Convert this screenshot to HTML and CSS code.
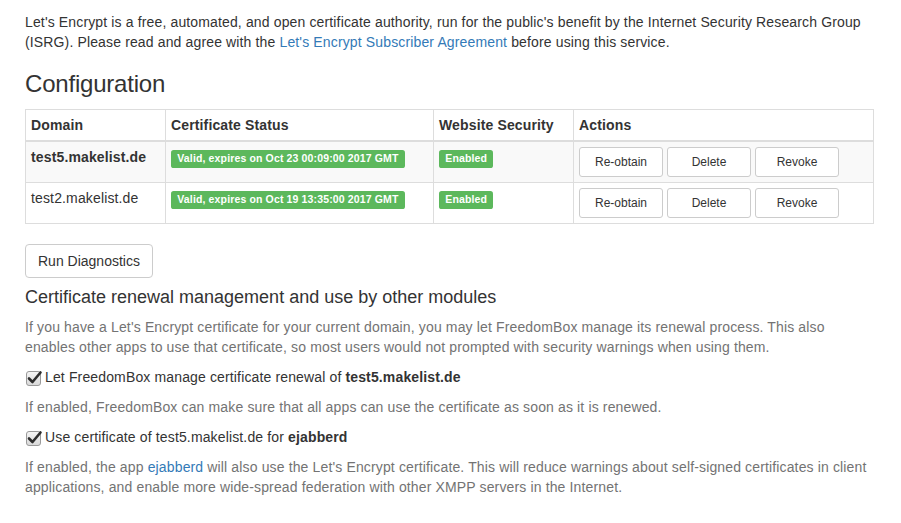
FILE: index.html
```html
<!DOCTYPE html>
<html>
<head>
<meta charset="utf-8">
<link rel="stylesheet" href="styles.css">
</head>
<body>
<div class="container">
  <p class="intro">Let's Encrypt is a free, automated, and open certificate authority, run for the public's benefit by the Internet Security Research Group (ISRG). Please read and agree with the <a href="#">Let's Encrypt Subscriber Agreement</a> before using this service.</p>

  <h3 class="title">Configuration</h3>

  <table class="cert-table">
    <colgroup>
      <col class="c-domain">
      <col class="c-status">
      <col class="c-security">
      <col class="c-actions">
    </colgroup>
    <thead>
      <tr>
        <th>Domain</th>
        <th>Certificate Status</th>
        <th>Website Security</th>
        <th>Actions</th>
      </tr>
    </thead>
    <tbody>
      <tr class="odd">
        <td><strong>test5.makelist.de</strong></td>
        <td><span class="label">Valid, expires on Oct 23 00:09:00 2017 GMT</span></td>
        <td><span class="label">Enabled</span></td>
        <td>
          <div class="actions">
            <button class="btn btn-sm">Re-obtain</button>
            <button class="btn btn-sm">Delete</button>
            <button class="btn btn-sm">Revoke</button>
          </div>
        </td>
      </tr>
      <tr>
        <td>test2.makelist.de</td>
        <td><span class="label">Valid, expires on Oct 19 13:35:00 2017 GMT</span></td>
        <td><span class="label">Enabled</span></td>
        <td>
          <div class="actions">
            <button class="btn btn-sm">Re-obtain</button>
            <button class="btn btn-sm">Delete</button>
            <button class="btn btn-sm">Revoke</button>
          </div>
        </td>
      </tr>
    </tbody>
  </table>

  <button class="btn btn-default">Run Diagnostics</button>

  <h4 class="subtitle">Certificate renewal management and use by other modules</h4>

  <p class="help">If you have a Let's Encrypt certificate for your current domain, you may let FreedomBox manage its renewal process. This also enables other apps to use that certificate, so most users would not prompted with security warnings when using them.</p>

  <div class="checkbox">
    <label>
      <svg class="cb" width="17" height="17" viewBox="0 0 17 17">
        <defs>
          <linearGradient id="g1" x1="0" y1="0" x2="0" y2="1">
            <stop offset="0" stop-color="#f6f6f6"/>
            <stop offset="1" stop-color="#d8d8d8"/>
          </linearGradient>
        </defs>
        <rect x="0.5" y="2.5" width="14" height="14" rx="2.5" fill="url(#g1)" stroke="#9a9a9a"/>
        <path d="M3 9.5 L6.5 13 L14.5 3.5" fill="none" stroke="#2e2e2e" stroke-width="2.6" stroke-linecap="round" stroke-linejoin="round"/>
      </svg>
      <span>Let FreedomBox manage certificate renewal of <strong>test5.makelist.de</strong></span>
    </label>
  </div>
  <p class="help block">If enabled, FreedomBox can make sure that all apps can use the certificate as soon as it is renewed.</p>

  <div class="checkbox">
    <label>
      <svg class="cb" width="17" height="17" viewBox="0 0 17 17">
        <defs>
          <linearGradient id="g2" x1="0" y1="0" x2="0" y2="1">
            <stop offset="0" stop-color="#f6f6f6"/>
            <stop offset="1" stop-color="#d8d8d8"/>
          </linearGradient>
        </defs>
        <rect x="0.5" y="2.5" width="14" height="14" rx="2.5" fill="url(#g2)" stroke="#9a9a9a"/>
        <path d="M3 9.5 L6.5 13 L14.5 3.5" fill="none" stroke="#2e2e2e" stroke-width="2.6" stroke-linecap="round" stroke-linejoin="round"/>
      </svg>
      <span>Use certificate of test5.makelist.de for <strong>ejabberd</strong></span>
    </label>
  </div>
  <p class="help block">If enabled, the app <a href="#">ejabberd</a> will also use the Let's Encrypt certificate. This will reduce warnings about self-signed certificates in client applications, and enable more wide-spread federation with other XMPP servers in the Internet.</p>
</div>
</body>
</html>
```

FILE: styles.css
```css
html, body {
  margin: 0;
  padding: 0;
  background: #fff;
}

body {
  font-family: "Liberation Sans", Arial, Helvetica, sans-serif;
  font-size: 14px;
  line-height: 20px;
  color: #333;
  letter-spacing: 0.14px;
}

.container {
  padding: 12px 28px 0 25px;
}

a {
  color: #337ab7;
  text-decoration: none;
}

p {
  margin: 0 0 10px;
}

.title {
  font-size: 24px;
  font-weight: 500;
  line-height: 1.1;
  margin: 19px 0 12px;
  color: #333;
  letter-spacing: -0.2px;
}

.subtitle {
  font-size: 18px;
  font-weight: 500;
  line-height: 1.1;
  margin: 10px 0 9px;
  color: #333;
  letter-spacing: 0;
}

.cert-table {
  width: 100%;
  table-layout: fixed;
  border-collapse: collapse;
  border-spacing: 0;
  margin-bottom: 20px;
  border: 1px solid #ddd;
}

.c-domain { width: 140px; }
.c-status { width: 268px; }
.c-security { width: 140px; }
.c-actions { width: 300px; }

.cert-table th,
.cert-table td {
  padding: 5px;
  border: 1px solid #ddd;
  text-align: left;
  vertical-align: top;
  line-height: 20px;
}

.cert-table thead th {
  border-bottom: 2px solid #ddd;
  font-weight: bold;
  vertical-align: bottom;
}

.cert-table tr.odd td {
  background: #f9f9f9;
}

.label {
  display: inline;
  padding: .2em .6em .3em;
  font-size: 10.5px;
  font-weight: bold;
  line-height: 1;
  color: #fff;
  background: #5cb85c;
  border-radius: .25em;
  white-space: nowrap;
  vertical-align: baseline;
}

.actions {
  display: flex;
  gap: 4px;
}

.btn {
  font-family: inherit;
  color: #333;
  background: #fff;
  border: 1px solid #ccc;
  cursor: pointer;
  text-align: center;
  white-space: nowrap;
  margin: 0;
  letter-spacing: 0;
}

.btn-sm {
  width: 84px;
  height: 30px;
  padding: 5px 10px;
  font-size: 12px;
  line-height: 1.5;
  border-radius: 3px;
}

.btn-default {
  display: block;
  height: 34px;
  padding: 6px 12px;
  font-size: 14px;
  line-height: 20px;
  border-radius: 4px;
}

.help {
  color: #737373;
}

.help.block {
  margin-top: 5px;
}

.checkbox {
  margin: 10px 0;
}

.checkbox label {
  display: flex;
  align-items: flex-start;
  gap: 2px;
  min-height: 20px;
}

.cb {
  flex: none;
  margin-top: 2px;
  margin-left: 1px;
}

strong {
  font-weight: bold;
}
```
